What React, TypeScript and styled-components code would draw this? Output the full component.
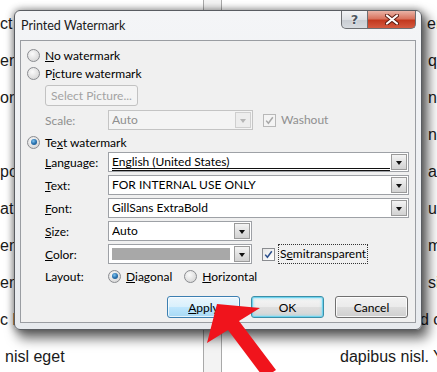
import React from "react";
import styled, { createGlobalStyle, css } from "styled-components";

const Global = createGlobalStyle`
  html, body { margin: 0; padding: 0; background: #fff; }
  body { width: 437px; height: 372px; overflow: hidden; }
`;

const Page = styled.div`
  position: relative;
  width: 437px;
  height: 372px;
  overflow: hidden;
  background: #fff;
  display: grid;
  grid-template-columns: 203px 19px 1fr;
  font-family: "Liberation Sans", Arial, sans-serif;
  font-size: 16px;
  color: #1a1a1a;
`;

const TextColumn = styled.div`
  padding-top: 5px;
  overflow: hidden;
  min-width: 0;
`;

const TextLine = styled.div<{ $indent: number }>`
  height: 37px;
  line-height: 37px;
  white-space: nowrap;
  padding-left: ${(p) => p.$indent}px;
`;

const Divider = styled.div`
  border-left: 1px solid #a9a9a9;
  border-right: 1px solid #a9a9a9;
  background: #f3f3f3;
`;

const Dialog = styled.div`
  position: absolute;
  left: 14px;
  top: 10px;
  width: 406px;
  height: 318px;
  border: 1px solid #5a5d62;
  border-radius: 6px;
  background: linear-gradient(180deg, #f4f5f7 0%, #e7eaee 100%);
  box-shadow: 5px 7px 12px 2px rgba(0, 0, 0, 0.55), 0 0 7px 1px rgba(0, 0, 0, 0.35);
  display: flex;
  flex-direction: column;
  font-family: Lato, "Noto Sans", sans-serif;
  font-size: 12px;
  color: #000;
`;

const TitleBar = styled.div`
  height: 29px;
  display: flex;
  align-items: flex-start;
  padding: 0 5px 0 6px;
`;

const Title = styled.div`
  flex: 1;
  line-height: 29px;
  font-size: 12.5px;
  color: #1b1b1b;
`;

const CaptionButton = styled.div<{ $close?: boolean }>`
  height: 18px;
  display: flex;
  align-items: center;
  justify-content: center;
  border: 1px solid #6d6f73;
  border-top: none;
  box-sizing: border-box;
  ${(p) =>
    p.$close
      ? css`
          width: 48px;
          border-radius: 0 0 5px 0;
          border-left: none;
          background: linear-gradient(180deg, #eab3a6 0%, #d9745f 45%, #c3391f 55%, #d55a40 100%);
        `
      : css`
          width: 27px;
          border-radius: 0 0 0 5px;
          background: linear-gradient(180deg, #f2f3f5 0%, #dde0e4 50%, #c9cdd3 55%, #d7dbe0 100%);
        `}
`;

const HelpGlyph = styled.span`
  font-family: "DejaVu Sans", sans-serif;
  font-size: 13px;
  font-weight: bold;
  color: #4d5560;
  text-shadow: 0 0 2px #fff, 0 0 1px #fff;
  line-height: 1;
`;

const Panel = styled.div`
  margin: 0 5px 6px 5px;
  height: 283px;
  box-sizing: border-box;
  border: 1px solid #9a9da2;
  background: #f0f0f0;
  padding: 5px 6px 4px 6px;
  display: flex;
  flex-direction: column;
`;

const Row = styled.div<{ $mt?: number; $h?: number; $indent?: number }>`
  display: flex;
  align-items: center;
  margin-top: ${(p) => p.$mt ?? 0}px;
  height: ${(p) => p.$h ?? 18}px;
  padding-left: ${(p) => p.$indent ?? 0}px;
`;

const Radio = styled.span<{ $checked?: boolean; $gap?: number }>`
  width: 11px;
  height: 11px;
  margin-left: ${(p) => p.$gap ?? 0}px;
  border-radius: 50%;
  border: 1px solid #8a8c90;
  background: radial-gradient(circle at 40% 35%, #fafafa 0%, #e0e0e0 60%, #cfcfcf 100%);
  display: inline-flex;
  align-items: center;
  justify-content: center;
  flex: none;
  &::after {
    content: "";
    display: ${(p) => (p.$checked ? "block" : "none")};
    width: 6px;
    height: 6px;
    border-radius: 50%;
    background: radial-gradient(circle at 40% 35%, #7fc3ef 0%, #2a73b0 50%, #124a7d 100%);
  }
`;

const RadioLabel = styled.span`
  margin-left: 5px;
  white-space: nowrap;
`;

const Check = styled.span<{ $disabled?: boolean }>`
  width: 11px;
  height: 11px;
  border: 1px solid ${(p) => (p.$disabled ? "#b8b8b8" : "#8a8c90")};
  background: ${(p) => (p.$disabled ? "#f4f4f4" : "linear-gradient(135deg,#e6e6e6,#ffffff)")};
  display: inline-flex;
  align-items: center;
  justify-content: center;
  flex: none;
  svg { display: block; }
`;

const Label = styled.span<{ $disabled?: boolean; $w?: number }>`
  width: ${(p) => p.$w ?? 63}px;
  flex: none;
  color: ${(p) => (p.$disabled ? "#8f8f8f" : "#000")};
  white-space: nowrap;
`;

const PushButton = styled.div<{ $variant?: "disabled" | "hot" | "default" | "normal"; $w: number; $h: number }>`
  width: ${(p) => p.$w}px;
  height: ${(p) => p.$h}px;
  box-sizing: border-box;
  border-radius: 3px;
  display: flex;
  align-items: center;
  justify-content: center;
  white-space: nowrap;
  ${(p) => {
    switch (p.$variant) {
      case "disabled":
        return css`
          border: 1px solid #c2c2c2;
          background: #f4f4f4;
          color: #a3a3a3;
        `;
      case "hot":
        return css`
          border: 1px solid #3c7fb1;
          background: linear-gradient(180deg, #eaf6fd 0%, #d9f0fc 48%, #bee6fd 52%, #a7d9f5 100%);
          box-shadow: inset 0 0 0 1px rgba(255, 255, 255, 0.7);
        `;
      case "default":
        return css`
          border: 1px solid #3c8fa8;
          background: linear-gradient(180deg, #f6f6f6 0%, #ececec 48%, #dfdfdf 52%, #d4d4d4 100%);
          box-shadow: inset 0 0 0 1px #6fd3ee, inset 0 0 2px 2px rgba(130, 220, 245, 0.5);
        `;
      default:
        return css`
          border: 1px solid #707070;
          background: linear-gradient(180deg, #f2f2f2 0%, #ebebeb 48%, #dddddd 52%, #cfcfcf 100%);
          box-shadow: inset 0 0 0 1px rgba(255, 255, 255, 0.8);
        `;
    }
  }}
`;

const Combo = styled.div<{ $w?: number; $disabled?: boolean }>`
  ${(p) => (p.$w ? `width: ${p.$w}px;` : "flex: 1;")}
  height: 20px;
  box-sizing: border-box;
  border: 1px solid ${(p) => (p.$disabled ? "#c4c4c4" : "#9ea1a6")};
  background: ${(p) => (p.$disabled ? "#f4f4f4" : "#fff")};
  display: flex;
  align-items: center;
  padding: 0 1px 0 3px;
  color: ${(p) => (p.$disabled ? "#8f8f8f" : "#000")};
`;

const ComboText = styled.span<{ $underline?: boolean }>`
  flex: 1;
  min-width: 0;
  white-space: nowrap;
  overflow: hidden;
  height: 18px;
  line-height: 17px;
  box-sizing: border-box;
  ${(p) =>
    p.$underline &&
    css`
      border-bottom: 3px double #111;
      height: 17px;
      line-height: 15px;
      margin-top: 1px;
    `}
`;

const Swatch = styled.span`
  flex: 1;
  height: 12px;
  margin-right: 3px;
  background: #a8a8a8;
`;

const DropButton = styled.span<{ $disabled?: boolean }>`
  width: 16px;
  height: 16px;
  box-sizing: border-box;
  flex: none;
  margin-left: 1px;
  border: 1px solid ${(p) => (p.$disabled ? "#cfcfcf" : "#9a9a9a")};
  background: ${(p) =>
    p.$disabled ? "#ededed" : "linear-gradient(180deg, #f4f4f4 0%, #e2e2e2 50%, #d2d2d2 100%)"};
  display: flex;
  align-items: center;
  justify-content: center;
  &::after {
    content: "";
    border-left: 3.5px solid transparent;
    border-right: 3.5px solid transparent;
    border-top: 4px solid ${(p) => (p.$disabled ? "#b5b5b5" : "#111")};
    margin-top: 1px;
  }
`;

const CheckGroup = styled.span<{ $disabled?: boolean }>`
  display: inline-flex;
  align-items: center;
  margin-left: 10px;
  color: ${(p) => (p.$disabled ? "#8f8f8f" : "#000")};
`;

const CheckText = styled.span<{ $focus?: boolean }>`
  margin-left: 3px;
  padding: 1px 1px;
  border: 1px dotted ${(p) => (p.$focus ? "#333" : "transparent")};
  line-height: 16px;
`;

const ButtonRow = styled.div`
  display: flex;
  justify-content: flex-end;
  gap: 11px;
  margin-top: 11px;
  padding-right: 1px;
`;

const ArrowLayer = styled.svg`
  position: absolute;
  left: 0;
  top: 0;
  pointer-events: none;
`;

const CheckMark = ({ color }: { color: string }) => (
  <svg width="9" height="9" viewBox="0 0 9 9">
    <path d="M1.2 4.6 L3.4 7.3 L7.8 1.2" fill="none" stroke={color} strokeWidth="1.5" />
  </svg>
);

const leftLines: [string, number][] = [
  ["ct", 0],
  ["en", 0],
  ["or", 0],
  ["", 0],
  ["po", 0],
  ["at,", 0],
  ["en", 0],
  ["en", 0],
  ["c l", 0],
  ["nisl eget", 5],
];

const rightLines: [string, number][] = [
  ["er", 205],
  ["qu", 206],
  ["nc", 206],
  ["na", 206],
  ["au", 206],
  ["us", 206],
  ["m.", 206],
  ["si", 206],
  ["d c", 198],
  ["dapibus nisl. Y", 118],
];

export default function App() {
  return (
    <>
      <Global />
      <Page>
        <TextColumn>
          {leftLines.map(([t, i], k) => (
            <TextLine key={k} $indent={i}>
              {t}
            </TextLine>
          ))}
        </TextColumn>
        <Divider />
        <TextColumn>
          {rightLines.map(([t, i], k) => (
            <TextLine key={k} $indent={i}>
              {t}
            </TextLine>
          ))}
        </TextColumn>

        <Dialog>
          <TitleBar>
            <Title>Printed Watermark</Title>
            <CaptionButton>
              <HelpGlyph>?</HelpGlyph>
            </CaptionButton>
            <CaptionButton $close>
              <svg width="14" height="11" viewBox="0 0 14 11">
                <path d="M2 1.5 L12 9.5 M12 1.5 L2 9.5" stroke="#5a1a10" strokeWidth="4" strokeLinecap="round" />
                <path d="M2 1.5 L12 9.5 M12 1.5 L2 9.5" stroke="#fff" strokeWidth="2.2" strokeLinecap="round" />
              </svg>
            </CaptionButton>
          </TitleBar>

          <Panel>
            <Row>
              <Radio />
              <RadioLabel>
                <u>N</u>o watermark
              </RadioLabel>
            </Row>
            <Row>
              <Radio />
              <RadioLabel>
                P<u>i</u>cture watermark
              </RadioLabel>
            </Row>
            <Row $mt={3} $h={21} $indent={18}>
              <PushButton $variant="disabled" $w={93} $h={21}>
                Select Picture...
              </PushButton>
            </Row>
            <Row $mt={4} $h={20} $indent={18}>
              <Label $disabled>Scale:</Label>
              <Combo $w={145} $disabled>
                <ComboText>Auto</ComboText>
                <DropButton $disabled />
              </Combo>
              <CheckGroup $disabled>
                <Check $disabled>
                  <CheckMark color="#a8a8a8" />
                </Check>
                <CheckText>Washout</CheckText>
              </CheckGroup>
            </Row>
            <Row $mt={3}>
              <Radio $checked />
              <RadioLabel>
                Te<u>x</u>t watermark
              </RadioLabel>
            </Row>
            <Row $mt={1} $h={20} $indent={18}>
              <Label>
                <u>L</u>anguage:
              </Label>
              <Combo>
                <ComboText $underline>English (United States)</ComboText>
                <DropButton />
              </Combo>
            </Row>
            <Row $mt={3} $h={20} $indent={18}>
              <Label>
                <u>T</u>ext:
              </Label>
              <Combo>
                <ComboText>FOR INTERNAL USE ONLY</ComboText>
                <DropButton />
              </Combo>
            </Row>
            <Row $mt={3} $h={20} $indent={18}>
              <Label>
                <u>F</u>ont:
              </Label>
              <Combo>
                <ComboText>GillSans ExtraBold</ComboText>
                <DropButton />
              </Combo>
            </Row>
            <Row $mt={3} $h={20} $indent={18}>
              <Label>
                <u>S</u>ize:
              </Label>
              <Combo $w={144}>
                <ComboText>Auto</ComboText>
                <DropButton />
              </Combo>
            </Row>
            <Row $mt={3} $h={20} $indent={18}>
              <Label>
                <u>C</u>olor:
              </Label>
              <Combo $w={144}>
                <Swatch />
                <DropButton />
              </Combo>
              <CheckGroup>
                <Check>
                  <CheckMark color="#2b4f8c" />
                </Check>
                <CheckText $focus>
                  S<u>e</u>mitransparent
                </CheckText>
              </CheckGroup>
            </Row>
            <Row $mt={3} $indent={18}>
              <Label>Layout:</Label>
              <Radio $checked />
              <RadioLabel>
                <u>D</u>iagonal
              </RadioLabel>
              <Radio $gap={12} />
              <RadioLabel>
                <u>H</u>orizontal
              </RadioLabel>
            </Row>
            <ButtonRow>
              <PushButton $variant="hot" $w={73} $h={22}>
                <span>
                  <u>A</u>pply
                </span>
              </PushButton>
              <PushButton $variant="default" $w={73} $h={22}>
                OK
              </PushButton>
              <PushButton $variant="normal" $w={73} $h={22}>
                Cancel
              </PushButton>
            </ButtonRow>
          </Panel>
        </Dialog>

        <ArrowLayer width="437" height="372" viewBox="0 0 437 372">
          <polygon
            points="217,304 260,308 239,321 276,370 264,378 228,330 207,343"
            fill="#f0141c"
          />
        </ArrowLayer>
      </Page>
    </>
  );
}
